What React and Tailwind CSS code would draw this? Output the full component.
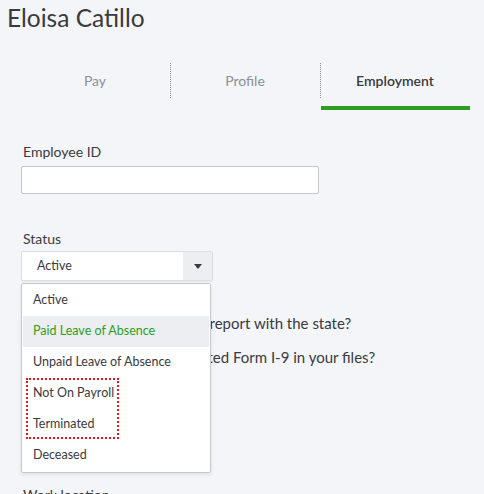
const STATUSES = [
  'Active',
  'Paid Leave of Absence',
  'Unpaid Leave of Absence',
  'Not On Payroll',
  'Terminated',
  'Deceased',
];

function Tabs() {
  const tabs = ['Pay', 'Profile', 'Employment'];
  return (
    <div className="ml-[20px] flex w-[450px] h-[51px] mt-[26px]">
      {tabs.map((t, i) => {
        const active = t === 'Employment';
        return (
          <div key={t} className="relative flex-1 flex items-center justify-center">
            {i > 0 && (
              <span className="absolute left-0 top-[4px] h-[35px] border-l border-dotted border-[#8d9096]" />
            )}
            <span
              className={
                active
                  ? 'text-[14px] font-semibold text-[#393a3d] -mt-[9px]'
                  : 'text-[14px] text-[#8d9096] -mt-[9px]'
              }
            >
              {t}
            </span>
            {active && <span className="absolute left-[1px] right-0 bottom-0 h-[4px] bg-[#2ca01c]" />}
          </div>
        );
      })}
    </div>
  );
}

function StatusSelect() {
  return (
    <div className="relative w-[192px]">
      <div className="flex h-[30px] rounded-[2px] border border-[#dcdee2] bg-white shadow-[0_1px_1px_rgba(0,0,0,0.06)]">
        <div className="flex-1 flex items-center pl-[15px] text-[12.5px] text-[#393a3d]">Active</div>
        <div className="w-[29px] flex items-center justify-center bg-[#eceef1]">
          <svg width="8" height="5" viewBox="0 0 8 5">
            <path d="M0 0h8L4 5z" fill="#393a3d" />
          </svg>
        </div>
      </div>

      {/* open option list */}
      <ul className="absolute left-0 top-[32px] z-10 w-[190px] rounded-[2px] border border-[#c5c8cd] bg-white p-[1px] shadow-[0_2px_4px_rgba(0,0,0,0.08)]">
        {STATUSES.map((s) => {
          const hover = s === 'Paid Leave of Absence';
          return (
            <li
              key={s}
              className={[
                'h-[31px] flex items-center pl-[10px] text-[12.5px]',
                hover ? 'bg-[#eceef1] text-[#2ca01c]' : 'text-[#393a3d]',
              ].join(' ')}
            >
              {s}
            </li>
          );
        })}
        <span className="absolute left-[4px] top-[94px] w-[93px] h-[61px] border-2 border-dotted border-[#e8141c]" />
      </ul>
    </div>
  );
}

export default function App() {
  return (
    <div className="w-[484px] h-[494px] overflow-hidden bg-[#f4f5f8] font-['Lato','Open_Sans',sans-serif] text-[#393a3d]">
      <h1 className="pl-[7px] pt-[3px] text-[24.5px] leading-[30px] text-[#393a3d]">Eloisa Catillo</h1>
      <Tabs />

      <div className="pl-[21px] pt-[33px]">
        <label className="block pl-[2px] text-[14px] leading-[18px]">Employee ID</label>
        <input className="mt-[5px] block w-[298px] h-[28px] rounded-[2px] border border-[#c5c8cd] bg-white" />

        <label className="block pl-[2px] mt-[36px] text-[14px] leading-[18px]">Status</label>
        <div className="mt-[3px]">
          <StatusSelect />
        </div>

        <p className="mt-[32px] pl-[38px] text-[15px] leading-[20px] whitespace-nowrap">Did you file a new hire report with the state?</p>
        <p className="mt-[14px] pl-[41px] text-[15px] leading-[20px] whitespace-nowrap">Do you have a completed Form I-9 in your files?</p>

        <label className="block pl-[2px] mt-[119px] text-[14px] leading-[18px]">Work location</label>
      </div>
    </div>
  );
}
